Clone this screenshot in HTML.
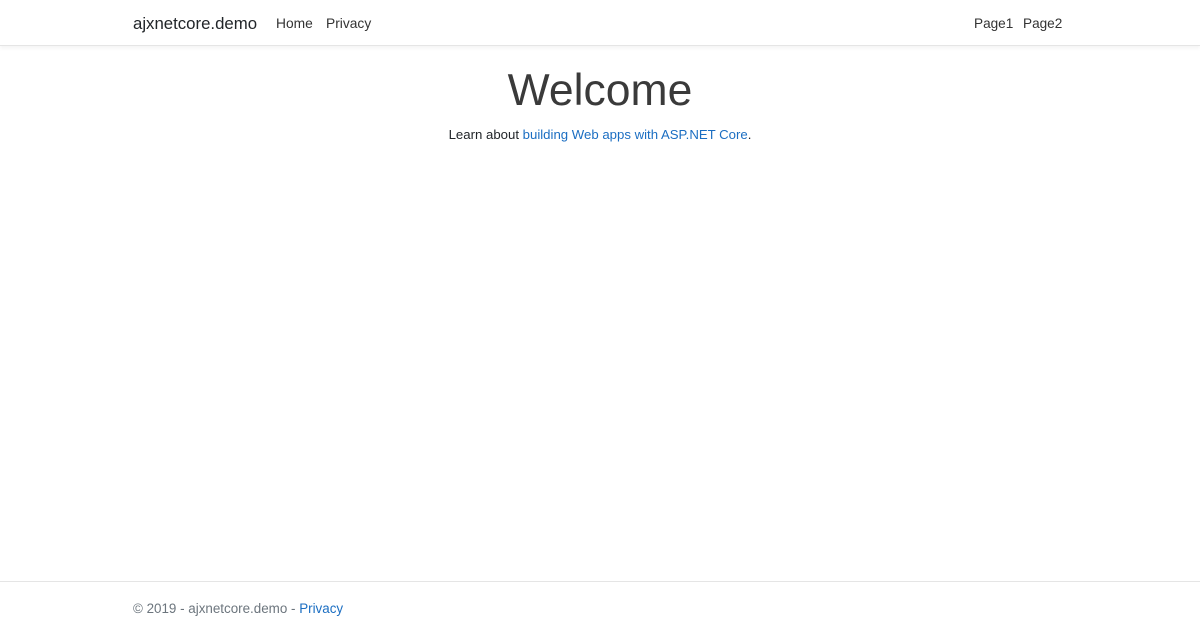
<!DOCTYPE html>
<html><head><meta charset="utf-8"><style>
body{margin:0;width:1200px;height:631px;position:relative;font-family:"Liberation Sans",sans-serif;background:#fff;color:#212529;overflow:hidden}
.nav{position:absolute;top:0;left:0;width:1200px;height:45px;border-bottom:1px solid #e5e5e5;box-shadow:0 2px 4px rgba(0,0,0,.05)}
.t{position:absolute;white-space:nowrap}
a{color:#1b6ec2;text-decoration:none}
.footer{position:absolute;top:581px;left:0;width:1200px;border-top:1px solid #e5e5e5}
</style></head><body>
<div class="nav"></div>
<div class="t" style="left:133px;top:14px;font-size:16.8px;color:#212529">ajxnetcore.demo</div>
<div class="t" style="left:276px;top:16px;font-size:13.8px;color:#333">Home</div>
<div class="t" style="left:326px;top:16px;font-size:13.8px;color:#333">Privacy</div>
<div class="t" style="left:974px;top:16px;font-size:13.6px;color:#333">Page1</div>
<div class="t" style="left:1023px;top:16px;font-size:13.6px;color:#333">Page2</div>
<div class="t" style="left:0;width:1200px;text-align:center;top:66px;font-size:44.5px;font-weight:300;color:#3a3a3a">Welcome</div>
<div class="t" style="left:0;width:1200px;text-align:center;top:127px;font-size:13.2px">Learn about <a>building Web apps with ASP.NET Core</a>.</div>
<div class="footer"></div>
<div class="t" style="left:133px;top:601px;font-size:13.4px;color:#6c757d">© 2019 - ajxnetcore.demo - <a>Privacy</a></div>
</body></html>
